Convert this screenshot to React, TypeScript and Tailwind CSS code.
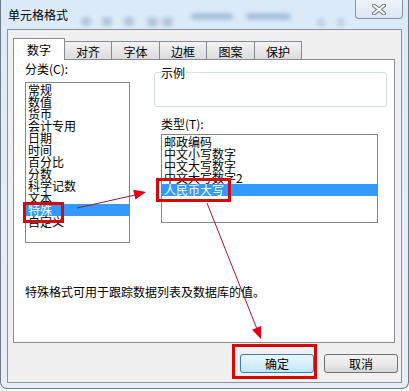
import React from "react";

const font = { fontFamily: '"Noto Sans CJK SC", "Noto Sans", sans-serif' };

const leftItems = ["常规", "数值", "货币", "会计专用", "日期", "时间", "百分比", "分数", "科学记数", "文本", "特殊", "自定义"];
const typeItems = ["邮政编码", "中文小写数字", "中文大写数字", "中文大写数字2", "人民币大写"];

function ListItem({ text, selected }: { text: string; selected?: boolean }) {
  return (
    <div
      className={
        "h-[12px] leading-[12px] pl-[2px] whitespace-nowrap text-[12px] " +
        (selected ? "bg-[#3399ff] text-white" : "text-black")
      }
    >
      {text}
    </div>
  );
}

export default function App() {
  return (
    <div className="relative w-[409px] h-[391px] bg-white overflow-hidden" style={font}>
      <div className="w-[409px] h-[389px] flex flex-col border-x border-b border-[#6f7b88] rounded-b-[7px] bg-gradient-to-b from-[#dbeaf8] via-[#e3edf7] to-[#e9eef4]">
        {/* title bar */}
        <div className="relative h-[29px] flex items-center pl-[7px] shrink-0">
          <div className="absolute left-[80px] top-[17px] w-[10px] h-[9px] rounded bg-[#9fb6cf] blur-[2px] opacity-70" />
          <div className="absolute left-[101px] top-[17px] w-[10px] h-[9px] rounded bg-[#9fb6cf] blur-[2px] opacity-70" />
          <div className="absolute left-[123px] top-[17px] w-[10px] h-[9px] rounded bg-[#9fb6cf] blur-[2px] opacity-70" />
          <div className="absolute left-[146px] top-[17px] w-[11px] h-[10px] rounded bg-[#9fb6cf] blur-[2px] opacity-70" />
          <div className="absolute left-[161px] top-[17px] w-[11px] h-[10px] rounded bg-[#9fb6cf] blur-[2px] opacity-70" />
          <div className="absolute left-[190px] top-[13px] w-[42px] h-[7px] rounded bg-[#8faed0] blur-[2px] opacity-70" />
          <div className="absolute left-[245px] top-[13px] w-[45px] h-[7px] rounded bg-[#8faed0] blur-[2px] opacity-70" />
          <div className="absolute left-[316px] top-[18px] w-[8px] h-[9px] rounded bg-[#b3c7dc] blur-[2px] opacity-70" />
          <div className="absolute left-[336px] top-[18px] w-[8px] h-[9px] rounded bg-[#b3c7dc] blur-[2px] opacity-70" />
          <span className="relative text-[12px] leading-[14px] text-black">单元格格式</span>
          <div className="absolute left-[354px] top-0 w-[48px] h-[19px] rounded-b-[4px] border border-t-0 border-[#8696a8] bg-gradient-to-b from-[#eef4fa] to-[#dbe7f3] flex items-center justify-center">
            <svg width="14" height="11" viewBox="0 0 14 11">
              <path d="M2 1.5 L12 9.5 M12 1.5 L2 9.5" stroke="#6f7a86" strokeWidth="4" strokeLinecap="round" />
              <path d="M2 1.5 L12 9.5 M12 1.5 L2 9.5" stroke="#ffffff" strokeWidth="2" strokeLinecap="round" />
            </svg>
          </div>
        </div>

        {/* client area */}
        <div className="mx-[6px] h-[354px] border border-[#8b939c] bg-[#f0f0f0] flex flex-col">
          {/* tabs */}
          <div className="pt-[8px] pl-[5px] flex items-end h-[29px]">
            <div className="relative z-10 -mb-px w-[52px] h-[22px] bg-white border border-b-0 border-[#898c95] flex items-center justify-center text-[12px] leading-[12px] pt-px">
              数字
            </div>
            {[
              ["对齐", "w-[48px]"],
              ["字体", "w-[49px]"],
              ["边框", "w-[48px]"],
              ["图案", "w-[49px]"],
              ["保护", "w-[48px]"],
            ].map(([t, w]) => (
              <div
                key={t}
                className={
                  w +
                  " -ml-px h-[18px] border border-b-0 border-[#898c95] bg-gradient-to-b from-[#f3f3f3] to-[#dcdcdc] flex items-center justify-center text-[12px] leading-[12px] pt-[2px]"
                }
              >
                {t}
              </div>
            ))}
          </div>

          {/* panel */}
          <div className="ml-[5px] w-[382px] h-[284px] border border-[#898c95] bg-white flex flex-col">
            <div className="flex pt-[2px] pl-[11px]">
              {/* left column */}
              <div className="flex flex-col w-[105px]">
                <div className="text-[12px] leading-[14px] h-[14px]">分类(C):</div>
                <div className="mt-[6px] w-[105px] h-[161px] border border-[#828790] bg-white pt-px">
                  {leftItems.map((t) => (
                    <ListItem key={t} text={t} selected={t === "特殊"} />
                  ))}
                </div>
              </div>
              {/* right column */}
              <div className="ml-[24px] flex flex-col">
                <div className="relative mt-[10px] w-[233px] h-[35px] border border-[#d5dfe5] rounded-[3px]">
                  <span className="absolute left-[6px] -top-[6px] bg-white text-[12px] leading-[12px] pr-px">示例</span>
                </div>
                <div className="mt-[10px] pl-[7px] text-[12px] leading-[14px] h-[14px]">类型(T):</div>
                <div className="mt-[3px] ml-[7px] w-[217px] h-[89px] border border-[#828790] bg-white pt-px">
                  {typeItems.map((t) => (
                    <ListItem key={t} text={t} selected={t === "人民币大写"} />
                  ))}
                </div>
              </div>
            </div>
            <div className="mt-[42px] pl-[11px] text-[12px] leading-[14px]">特殊格式可用于跟踪数据列表及数据库的值。</div>
          </div>

          {/* buttons */}
          <div className="mt-[11px] flex justify-end gap-[10px] pr-[3px]">
            <button className="w-[74px] h-[19px] rounded-[3px] border border-[#3c7fb1] bg-gradient-to-b from-[#eaf6fd] via-[#d9f0fc] to-[#bee6fd] text-[12px] leading-[12px] text-black flex items-center justify-center">
              确定
            </button>
            <button className="w-[74px] h-[19px] rounded-[3px] border border-[#707070] bg-gradient-to-b from-[#f2f2f2] via-[#ebebeb] to-[#d6d6d6] text-[12px] leading-[12px] text-black flex items-center justify-center">
              取消
            </button>
          </div>
        </div>
      </div>

      {/* annotation overlays */}
      <div className="absolute left-[23px] top-[202px] w-[41px] h-[21px] border-[3px] border-[#d20a0a]" />
      <div className="absolute left-[156px] top-[178px] w-[75px] h-[24px] border-[3px] border-[#d20a0a]" />
      <div className="absolute left-[232px] top-[344px] w-[85px] h-[35px] border-[3px] border-[#d20a0a]" />
      <svg className="absolute left-0 top-0" width="409" height="391" viewBox="0 0 409 391">
        <line x1="77" y1="208" x2="135" y2="195" stroke="#9c1a2a" strokeWidth="1" />
        <polygon points="146,192 135.4,199.6 133.2,189.8" fill="#e3001b" />
        <line x1="207" y1="203" x2="257" y2="329" stroke="#9c1a2a" strokeWidth="1" />
        <polygon points="261,339 261.2,326.1 252,329.7" fill="#e3001b" />
      </svg>
    </div>
  );
}
